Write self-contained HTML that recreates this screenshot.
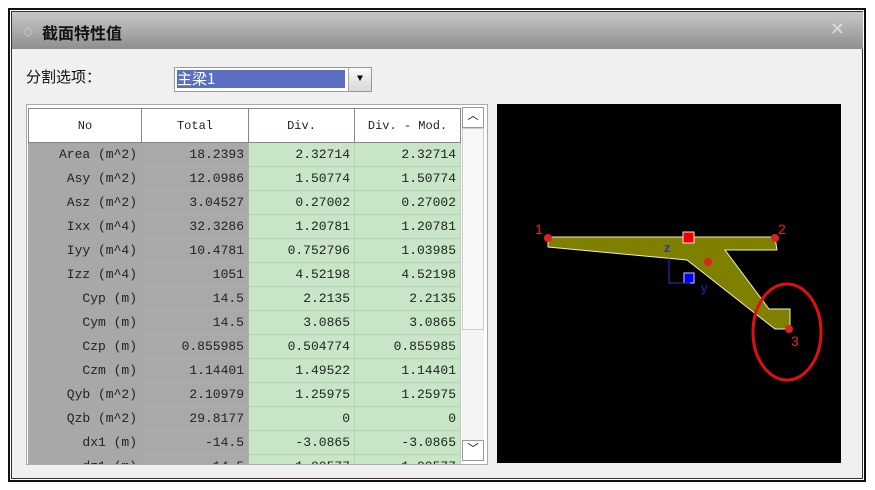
<!DOCTYPE html>
<html><head><meta charset="utf-8"><style>
body{margin:0;width:875px;height:490px;background:#fff;position:relative;overflow:hidden;font-family:"Liberation Mono","Noto Sans CJK SC",monospace;}
.frame{position:absolute;left:8px;top:8px;width:854px;height:470px;border:2px solid #111;background:#f0f0f0;box-shadow:inset 0 0 0 1px #fff,inset 0 0 0 2px #333;}
.title{position:absolute;left:12px;top:12px;width:851px;height:37px;background:linear-gradient(#c8c8c8,#8e8e8e);}
.title span{position:absolute;left:30px;top:8px;font:bold 16px "Noto Sans CJK SC",sans-serif;color:#111;}
.title i{position:absolute;left:11px;top:12px;font-style:normal;font-size:10px;color:#eee;}
.title b{position:absolute;right:18px;top:7px;color:#ddd;font:18px "Liberation Sans",sans-serif;}
.lbl{position:absolute;left:26px;top:66px;font:15px "Noto Sans CJK SC",sans-serif;color:#111;}
.combo{position:absolute;left:174px;top:67px;width:196px;height:23px;border:1px solid #999;background:#fff;}
.combo .sel{position:absolute;left:2px;top:2px;width:168px;height:18px;background:#5a6fc0;color:#fff;font:15px "Noto Sans CJK SC",sans-serif;line-height:18px;}
.combo .btn{position:absolute;right:0;top:0;width:22px;height:23px;background:linear-gradient(#fafafa,#d8d8d8);border-left:1px solid #aaa;font-size:10px;text-align:center;line-height:23px;}
.tbl{position:absolute;left:26px;top:104px;width:460px;height:359px;border:1px solid #aaa;background:#fff;overflow:hidden;}
table{border-collapse:collapse;position:absolute;left:1px;top:3px;table-layout:fixed;width:432px;}
td{height:23px;padding:0 4px 0 0;text-align:right;font-size:13px;color:#222;border:1px solid #bbb;white-space:pre;overflow:hidden;}
th{height:31px;font-weight:normal;font-size:12px;background:#fff;border:1px solid #888;color:#222;overflow:hidden;white-space:pre;}
td.a{background:#a8a8a8;border-color:#a8a8a8;}
td.b{background:#a9a9a9;border-color:#b0b0b0;}
td.c,td.d{background:#c8e5c8;border-color:#b8d0b8;}
.sb{position:absolute;left:435px;top:2px;width:22px;height:354px;background:#f4f4f4;}
.sb div{position:absolute;left:0;width:20px;height:19px;border:1px solid #999;background:#fff;font-size:11px;text-align:center;line-height:19px;}
</style></head><body>
<div class="frame"></div>
<div class="title"><i>◇</i><span>截面特性值</span><b>✕</b></div>
<div class="lbl">分割选项：</div>
<div class="combo"><div class="sel">主梁1</div><div class="btn">▼</div></div>
<div class="tbl">
<table>
<colgroup><col style="width:113px"><col style="width:107px"><col style="width:106px"><col style="width:106px"></colgroup>
<tr><th>No</th><th>Total</th><th>Div.</th><th>Div. - Mod.</th></tr>
<tr><td class="a">Area (m^2)</td><td class="b">18.2393</td><td class="c">2.32714</td><td class="d">2.32714</td></tr>
<tr><td class="a">Asy (m^2)</td><td class="b">12.0986</td><td class="c">1.50774</td><td class="d">1.50774</td></tr>
<tr><td class="a">Asz (m^2)</td><td class="b">3.04527</td><td class="c">0.27002</td><td class="d">0.27002</td></tr>
<tr><td class="a">Ixx (m^4)</td><td class="b">32.3286</td><td class="c">1.20781</td><td class="d">1.20781</td></tr>
<tr><td class="a">Iyy (m^4)</td><td class="b">10.4781</td><td class="c">0.752796</td><td class="d">1.03985</td></tr>
<tr><td class="a">Izz (m^4)</td><td class="b">1051</td><td class="c">4.52198</td><td class="d">4.52198</td></tr>
<tr><td class="a">Cyp (m)</td><td class="b">14.5</td><td class="c">2.2135</td><td class="d">2.2135</td></tr>
<tr><td class="a">Cym (m)</td><td class="b">14.5</td><td class="c">3.0865</td><td class="d">3.0865</td></tr>
<tr><td class="a">Czp (m)</td><td class="b">0.855985</td><td class="c">0.504774</td><td class="d">0.855985</td></tr>
<tr><td class="a">Czm (m)</td><td class="b">1.14401</td><td class="c">1.49522</td><td class="d">1.14401</td></tr>
<tr><td class="a">Qyb (m^2)</td><td class="b">2.10979</td><td class="c">1.25975</td><td class="d">1.25975</td></tr>
<tr><td class="a">Qzb (m^2)</td><td class="b">29.8177</td><td class="c">0</td><td class="d">0</td></tr>
<tr><td class="a">dx1 (m)</td><td class="b">-14.5</td><td class="c">-3.0865</td><td class="d">-3.0865</td></tr>
<tr><td class="a">dz1 (m)</td><td class="b">-14.5</td><td class="c">1.00577</td><td class="d">1.00577</td></tr>
</table>
<div class="sb"><div style="top:0">︿</div><div style="top:21px;height:200px;background:#f8f8f8;border-color:#ccc"></div><div style="top:333px">﹀</div></div>
</div>
<svg style="position:absolute;left:0;top:0" width="875" height="490">
<rect x="497" y="104" width="344" height="359" fill="#000"/>
<polygon points="548,237 775,237 777,250 725,250 769,309 790,309 790,329 775,329 687,260 548,247" fill="#808000" stroke="#f0f0c0" stroke-width="1"/>
<circle cx="548" cy="238" r="4" fill="#d22"/><circle cx="775" cy="238" r="4" fill="#d22"/><circle cx="789" cy="329" r="4" fill="#d22"/><circle cx="708" cy="262" r="4" fill="#d22"/>
<rect x="683" y="232" width="11" height="11" fill="#e00" stroke="#fdd"/>
<rect x="684" y="273" width="10" height="10" fill="#00f" stroke="#ccf"/>
<path d="M669 258 V283 H690" stroke="#33c" fill="none"/>
<text x="664" y="252" fill="#33a" font-family="Liberation Sans" font-size="13" font-weight="bold">z</text>
<text x="701" y="292" fill="#22c" font-family="Liberation Sans" font-size="13">y</text>
<text x="535" y="234" fill="#e22" font-family="Liberation Sans" font-size="14">1</text>
<text x="778" y="234" fill="#e22" font-family="Liberation Sans" font-size="14">2</text>
<text x="791" y="346" fill="#e22" font-family="Liberation Sans" font-size="14">3</text>
<ellipse cx="787" cy="332" rx="34" ry="48" fill="none" stroke="#e01010" stroke-width="3"/>
</svg>
</body></html>
